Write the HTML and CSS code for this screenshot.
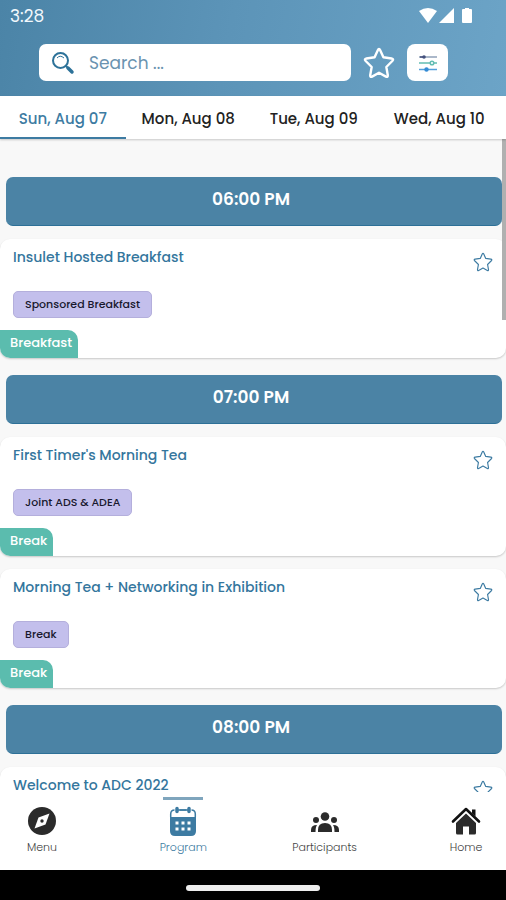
FILE: index.html
```html
<!DOCTYPE html>
<html lang="en">
<head>
<meta charset="utf-8">
<meta name="viewport" content="width=device-width, initial-scale=1">
<title>Program</title>
<link rel="stylesheet" href="styles.css">
</head>
<body>
<svg width="0" height="0" class="sprite" aria-hidden="true">
  <symbol id="star" viewBox="0 0 24 24">
    <path d="M12 1.500 Q12.500 1.500 12.900 2.400 L15.300 7.700 L21.400 8.600 Q23.400 9 22 10.500 L17.500 15 L18.600 21.200 Q18.700 22.900 17.200 22.200 L12 19.300 L6.800 22.200 Q5.300 22.900 5.400 21.200 L6.500 15 L2 10.500 Q0.600 9 2.600 8.600 L8.700 7.700 L11.100 2.400 Q11.500 1.500 12 1.500Z" fill="none" stroke="currentColor" stroke-linejoin="round"/>
  </symbol>
</svg>
<div class="app">
  <header class="header">
    <div class="status">
      <span>3:28</span>
      <svg width="54" height="18" viewBox="0 0 54 18" fill="#fff" aria-hidden="true">
        <path d="M0 4 Q9-2 18 4 L9 16Z"/>
        <path d="M35 1V16H20Z"/>
        <path d="M46 1h4v1h2q1 0 1 1v12q0 1-1 1h-8q-1 0-1-1V3q0-1 1-1h2z"/>
      </svg>
    </div>
    <div class="toolbar">
      <label class="search">
        <svg width="24" height="24" viewBox="0 0 24 24" fill="none" stroke="#2d7299" aria-hidden="true">
          <circle cx="9.500" cy="9.500" r="7.500" stroke-width="2"/>
          <path d="M6 7q3-3.500 7 0" stroke-width="1"/>
          <path d="M15 15l2 2" stroke-width="2"/>
          <path d="M17 17l4 4" stroke-width="3.500" stroke-linecap="round"/>
        </svg>
        <input type="text" placeholder="Search ..." aria-label="Search">
      </label>
      <button class="icon-button favourites" aria-label="Favourites"><svg width="32" height="32" stroke-width="1.800"><use href="#star"/></svg></button>
      <button class="icon-button filter" aria-label="Filter">
        <svg width="18" height="18" viewBox="0 0 18 18" stroke-width="1.500" fill="none" aria-hidden="true">
          <path d="M0 3h18" stroke="#8fa0b8"/><path d="M1 3h5" stroke="#44517d"/><circle cx="5" cy="3" r="1.800" fill="#44517d" stroke="none"/>
          <path d="M0 9h11M15 9h3" stroke="#63bdb3"/><circle cx="13" cy="9" r="1.800" stroke="#63bdb3"/>
          <path d="M0 15.500h18" stroke="#55a0dc"/><circle cx="7.500" cy="15.500" r="2.200" fill="#348bd5" stroke="none"/>
        </svg>
      </button>
    </div>
  </header>
  <nav class="tabs" aria-label="Days">
    <button class="tab active">Sun, Aug 07</button>
    <button class="tab">Mon, Aug 08</button>
    <button class="tab">Tue, Aug 09</button>
    <button class="tab">Wed, Aug 10</button>
  </nav>
  <main class="program">
    <div class="scrollbar"></div>
    <section class="slot">
      <h2 class="time">06:00 PM</h2>
      <article class="card">
        <div class="card-head"><h3>Insulet Hosted Breakfast</h3><button class="icon-button" aria-label="Add to favourites"><svg width="20" height="20" stroke-width="1.400"><use href="#star"/></svg></button></div>
        <span class="tag">Sponsored Breakfast</span>
        <span class="kind">Breakfast</span>
      </article>
    </section>
    <section class="slot">
      <h2 class="time">07:00 PM</h2>
      <article class="card">
        <div class="card-head"><h3>First Timer's Morning Tea</h3><button class="icon-button" aria-label="Add to favourites"><svg width="20" height="20" stroke-width="1.400"><use href="#star"/></svg></button></div>
        <span class="tag">Joint ADS &amp; ADEA</span>
        <span class="kind">Break</span>
      </article>
      <article class="card">
        <div class="card-head"><h3>Morning Tea + Networking in Exhibition</h3><button class="icon-button" aria-label="Add to favourites"><svg width="20" height="20" stroke-width="1.400"><use href="#star"/></svg></button></div>
        <span class="tag">Break</span>
        <span class="kind">Break</span>
      </article>
    </section>
    <section class="slot">
      <h2 class="time">08:00 PM</h2>
      <article class="card">
        <div class="card-head"><h3>Welcome to ADC 2022</h3><button class="icon-button" aria-label="Add to favourites"><svg width="20" height="20" stroke-width="1.400"><use href="#star"/></svg></button></div>
      </article>
    </section>
  </main>
  <nav class="bottom-nav" aria-label="Main">
    <a href="#menu" class="nav-item">
      <svg width="30" height="30" viewBox="0 0 30 30" aria-hidden="true"><circle cx="15" cy="15" r="14" fill="#2b2b2b"/><path d="M22.500 7.500 L18.500 18.500 L7.500 22.500 L11.500 11.500Z" fill="#fff"/><circle cx="15" cy="15" r="1.700" fill="#2b2b2b"/></svg>
      <span>Menu</span>
    </a>
    <a href="#program" class="nav-item current">
      <svg width="30" height="30" viewBox="0 0 30 30" aria-hidden="true">
        <path d="M2 11h26v14q0 5-5 5H7q-5 0-5-5z" fill="#3d7ba2"/>
        <path d="M2.700 11V8q0-4 4-4h16.600q4 0 4 4v3" fill="none" stroke="#3d7ba2" stroke-width="1.500"/>
        <path d="M9 2v5M21 2v5" stroke="#fff" stroke-width="5"/>
        <path d="M9 2.500v3M21 2.500v3" stroke="#3d7ba2" stroke-width="3.500" stroke-linecap="round"/>
        <path d="M10 4h10" stroke="#3d7ba2" stroke-width="1.500"/>
        <path d="M7.500 17h3m3 0h3m3 0h3M7.500 23h3m3 0h3m3 0h3" stroke="#fff" stroke-width="3"/>
      </svg>
      <span>Program</span>
    </a>
    <a href="#participants" class="nav-item">
      <svg width="30" height="30" viewBox="0 0 30 30" fill="#2b2b2b" aria-hidden="true">
        <circle cx="15" cy="10.500" r="4.300"/><circle cx="6" cy="14" r="3"/><circle cx="24" cy="14" r="3"/>
        <path d="M8 26v-2q0-7 7-7t7 7v2zM1 26v-2q0-5 6-5-1.500 2-1.500 7zM29 26v-2q0-5-6-5 1.500 2 1.500 7z"/>
      </svg>
      <span>Participants</span>
    </a>
    <a href="#home" class="nav-item">
      <svg width="30" height="30" viewBox="0 0 30 30" aria-hidden="true"><path d="M2 15.500 L15 3 L28 15.500" fill="none" stroke="#111" stroke-width="2.600" stroke-linecap="round" stroke-linejoin="round"/><path d="M21 3.500h3.500v7L21 7.300z" fill="#111"/><path d="M15 7.500l10 9.500v10q0 1.500-1.500 1.500H18v-8h-6v8H6.500Q5 28.500 5 27V17z" fill="#2b2b2b"/></svg>
      <span>Home</span>
    </a>
  </nav>
  <div class="system-bar"><div class="handle"></div></div>
</div>
</body>
</html>
```

FILE: styles.css
```css
* { box-sizing: border-box; }
body {
  margin: 0;
  font-family: Poppins, Inter, "Open Sans", sans-serif;
  color: #222;
}
button, input { font: inherit; color: inherit; border: 0; background: none; padding: 0; margin: 0; }
h2, h3 { margin: 0; }
svg { display: block; flex: none; }
.sprite { position: absolute; }

.app { display: flex; flex-direction: column; height: 100vh; overflow: hidden; }

.header { background: linear-gradient(100deg, #4b84a7, #5c94b8 45%, #6ca4c7); padding-bottom: 15px; }
.status {
  display: flex; align-items: center; justify-content: space-between;
  height: 32px; padding: 0 33px 0 10px;
  font-size: 17px; color: #f2f8fc;
}
.toolbar { display: flex; align-items: center; gap: 12px; padding: 12px 58px 0 39px; }
.search {
  flex: 1; min-width: 0; height: 37px;
  display: flex; align-items: center; gap: 14px;
  padding: 0 12px; border-radius: 7px; background: #fff;
}
.search input { flex: 1; min-width: 0; font-size: 17px; color: #5484a5; outline: 0; }
.search input::placeholder { color: #6a93b0; opacity: 1; }
.icon-button { display: grid; place-items: center; color: #3d7ba2; cursor: pointer; }
.favourites { color: #fff; }
.filter { width: 41px; height: 37px; border-radius: 8px; background: #fff; }

.tabs {
  display: grid; grid-template-columns: repeat(4, 1fr);
  flex: none; height: 43px; padding-right: 4px;
  background: #fff; box-shadow: 0 1px 2px #0003; z-index: 1;
}
.tab { padding-top: 3px; font-size: 15px; font-weight: 500; color: #222; border-bottom: 2px solid transparent; white-space: nowrap; }
.tab.active { color: #3d7ba2; border-color: #3d7ba2; }

.program { position: relative; flex: 1; min-height: 0; overflow: hidden; background: #f8f8f8; padding-top: 38px; }
.scrollbar { position: absolute; top: 0; right: 0; width: 4px; height: 181px; background: #b0b0b0; }
.slot { display: flex; flex-direction: column; gap: 13px; margin-bottom: 17px; }
.time {
  margin: 0 4px 0 6px; padding: 0 6px 3px 0; border-radius: 7px;
  background: #4b83a5; border-bottom: 1px solid #2d7097;
  color: #fff; font-size: 17px; font-weight: 600; line-height: 45px; text-align: center;
}
.card {
  display: flex; flex-direction: column; align-items: flex-start;
  min-height: 119px; border-radius: 10px; background: #fff;
  box-shadow: 0 1px 2px #0003; overflow: hidden;
}
.card-head { display: flex; justify-content: space-between; align-self: stretch; padding: 6px 13px 0; }
.card-head h3 { font-size: 14px; font-weight: 500; line-height: 24px; color: #34769d; }
.card-head .icon-button { padding-top: 7px; }
.tag {
  margin: 19px 0 0 13px; padding: 0 11px;
  border: 1px solid #b4afdc; border-radius: 5px; background: #c3bfec;
  font-size: 11px; font-weight: 500; line-height: 25px; color: #18182e;
}
.kind {
  margin-top: auto; padding: 0 6px 2px 10px;
  border-radius: 0 10px 0 0; background: #5bbcae;
  color: #fff; font-size: 13px; font-weight: 500; line-height: 26px;
}

.bottom-nav { display: flex; justify-content: space-between; flex: none; height: 78px; padding-left: 2px; background: #fff; }
.nav-item {
  position: relative; width: 80px; padding-top: 14px;
  display: flex; flex-direction: column; align-items: center; gap: 2px;
  font-size: 11px; font-weight: 300; line-height: 18px; color: #444; text-decoration: none;
}
.nav-item.current { color: #3d7ba2; }
.nav-item.current::before { content: ""; position: absolute; top: 5px; width: 40px; height: 3px; background: #7fa5bd; }
.system-bar { flex: none; height: 30px; display: grid; place-items: center; padding-top: 5px; background: #000; }
.handle { width: 134px; height: 6px; border-radius: 3px; background: #eee; }
```
